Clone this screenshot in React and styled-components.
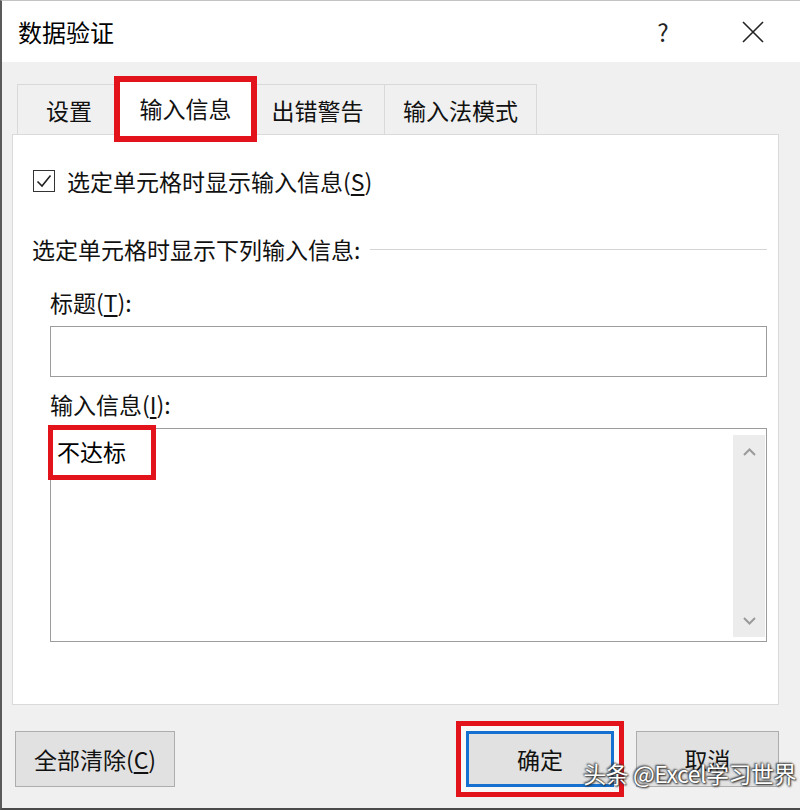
import React from "react";
import styled, { createGlobalStyle } from "styled-components";

const GlobalStyle = createGlobalStyle`
  html, body {
    margin: 0;
    padding: 0;
    background: #f0f0f0;
  }
  * {
    box-sizing: border-box;
  }
`;

const MARK = "#e3131b";

const Dialog = styled.div`
  position: relative;
  width: 800px;
  height: 810px;
  overflow: hidden;
  display: flex;
  flex-direction: column;
  border-left: 2px solid #5a5a5a;
  border-top: 1px solid #c4c4c4;
  border-bottom: 2px solid #4a4a4a;
  font-family: "Noto Sans CJK SC", "Noto Sans", sans-serif;
  color: #111;
`;

const TitleBar = styled.div`
  height: 61px;
  flex-shrink: 0;
  display: flex;
  align-items: center;
  padding-left: 16px;
  background: #fff;
`;

const Title = styled.div`
  font-size: 24px;
  line-height: 30px;
  color: #000;
  flex: 1;
`;

const TitleButton = styled.div`
  width: 40px;
  height: 40px;
  display: flex;
  align-items: center;
  justify-content: center;
  font-size: 24px;
  color: #222;
  margin-right: ${p => p.$gap || 0}px;
`;

const Body = styled.div`
  flex: 1;
  display: flex;
  flex-direction: column;
  background: #f0f0f0;
  padding: 20px 21px 0 10px;
`;

const TabRow = styled.div`
  height: 54px;
  display: flex;
  align-items: flex-end;
  padding-left: 6px;
`;

const Tab = styled.div`
  position: relative;
  z-index: ${p => (p.$active ? 2 : 0)};
  width: ${p => p.$w}px;
  height: ${p => (p.$active ? 54 : 52)}px;
  margin-left: -1px;
  display: flex;
  align-items: center;
  justify-content: center;
  font-size: 23px;
  padding-bottom: ${p => (p.$active ? 4 : 2)}px;
  color: #111;
  background: ${p => (p.$active ? "#fff" : "#f0f0f0")};
  border: 1px solid ${p => (p.$active ? "#fff" : "#d9d9d9")};
  border-bottom: none;
  outline: ${p => (p.$active ? `6px solid ${MARK}` : "none")};
`;

const Panel = styled.div`
  position: relative;
  z-index: 1;
  height: 571px;
  margin-top: -2px;
  background: #fff;
  border: 1px solid #dadada;
  padding: 0 11px 0 20px;
  display: flex;
  flex-direction: column;
`;

const CheckRow = styled.label`
  margin-top: 31px;
  height: 30px;
  display: flex;
  align-items: center;
  font-size: 23px;
`;

const CheckBox = styled.span`
  width: 22px;
  height: 22px;
  border: 1.5px solid #333;
  display: flex;
  align-items: center;
  justify-content: center;
  margin-right: 12px;
`;

const Key = styled.span`
  text-decoration: underline;
  text-underline-offset: 3px;
`;

const GroupHeader = styled.div`
  margin-top: 38px;
  height: 30px;
  display: flex;
  align-items: center;
  font-size: 23px;
  margin-left: -1px;
`;

const GroupLine = styled.div`
  flex: 1;
  height: 1px;
  background: #d5d5d5;
  margin-left: 10px;
`;

const Fields = styled.div`
  padding-left: 17px;
  display: flex;
  flex-direction: column;
`;

const FieldLabel = styled.div`
  margin-top: ${p => p.$top}px;
  height: 30px;
  line-height: 30px;
  font-size: 23px;
`;

const TextBox = styled.div`
  margin-top: 9px;
  height: 51px;
  border: 1px solid #9c9c9c;
  background: #fff;
`;

const TextArea = styled.div`
  margin-top: 9px;
  height: 214px;
  border: 1px solid #9c9c9c;
  background: #fff;
  display: flex;
`;

const AreaContent = styled.div`
  flex: 1;
  padding: 1px 0 0 2px;
`;

const Highlight = styled.span`
  display: inline-block;
  width: 98px;
  height: 45px;
  padding: 6px 0 0 4px;
  font-size: 23px;
  line-height: 30px;
  color: #000;
  outline: 5px solid ${MARK};
`;

const ScrollBar = styled.div`
  width: 32px;
  margin: 6px 1px 4px 0;
  background: #ececec;
  display: flex;
  flex-direction: column;
  justify-content: space-between;
  align-items: center;
  padding: 13px 0 12px;
`;

const Footer = styled.div`
  margin-top: 26px;
  padding-left: 3px;
  display: flex;
  align-items: center;
  gap: 22px;
`;

const Button = styled.div`
  width: ${p => p.$w}px;
  height: 56px;
  display: flex;
  align-items: center;
  justify-content: center;
  font-size: 23px;
  color: #111;
  background: #e1e1e1;
  border: ${p => (p.$primary ? "3px solid #1570cf" : "1px solid #adadad")};
  box-shadow: ${p => (p.$marked ? `0 0 0 5px #f8f8f8, 0 0 0 10px ${MARK}` : "none")};
  margin-right: ${p => (p.$push ? "auto" : "0")};
`;

const Watermark = styled.div`
  position: absolute;
  right: 4px;
  bottom: 21px;
  font-size: 23px;
  line-height: 28px;
  color: #fff;
  text-shadow: 0 0 2px #333, 1px 1px 2px #222, -1px -1px 2px #444;
  letter-spacing: -0.5px;
`;

const CheckIcon = () => (
  <svg width="16" height="14" viewBox="0 0 16 14">
    <path d="M1.5 7.5 L6 12 L14.5 1.5" fill="none" stroke="#222" strokeWidth="1.6" />
  </svg>
);

const CloseIcon = () => (
  <svg width="22" height="22" viewBox="0 0 22 22">
    <path d="M1 1 L21 21 M21 1 L1 21" stroke="#222" strokeWidth="1.6" />
  </svg>
);

const Chevron = ({ down }) => (
  <svg width="13" height="8" viewBox="0 0 13 8">
    <path
      d={down ? "M1 1 L6.5 6.5 L12 1" : "M1 7 L6.5 1.5 L12 7"}
      fill="none"
      stroke="#9a9a9a"
      strokeWidth="2"
    />
  </svg>
);

const tabs = [
  { label: "设置", w: 104 },
  { label: "输入信息", w: 131, active: true },
  { label: "出错警告", w: 135 },
  { label: "输入法模式", w: 153 },
];

export default function App() {
  return (
    <>
      <GlobalStyle />
      <Dialog>
        <TitleBar>
          <Title>数据验证</Title>
          <TitleButton $gap={50}>?</TitleButton>
          <TitleButton $gap={27}>
            <CloseIcon />
          </TitleButton>
        </TitleBar>
        <Body>
          <TabRow>
            {tabs.map(t => (
              <Tab key={t.label} $w={t.w} $active={t.active}>
                {t.label}
              </Tab>
            ))}
          </TabRow>
          <Panel>
            <CheckRow>
              <CheckBox>
                <CheckIcon />
              </CheckBox>
              选定单元格时显示输入信息(<Key>S</Key>)
            </CheckRow>
            <GroupHeader>
              选定单元格时显示下列输入信息:
              <GroupLine />
            </GroupHeader>
            <Fields>
              <FieldLabel $top={23}>
                标题(<Key>T</Key>):
              </FieldLabel>
              <TextBox />
              <FieldLabel $top={12}>
                输入信息(<Key>I</Key>):
              </FieldLabel>
              <TextArea>
                <AreaContent>
                  <Highlight>不达标</Highlight>
                </AreaContent>
                <ScrollBar>
                  <Chevron />
                  <Chevron down />
                </ScrollBar>
              </TextArea>
            </Fields>
          </Panel>
          <Footer>
            <Button $w={160} $push>
              全部清除(<Key>C</Key>)
            </Button>
            <Button $w={148} $primary $marked>
              确定
            </Button>
            <Button $w={143}>取消</Button>
          </Footer>
        </Body>
        <Watermark>头条 @Excel学习世界</Watermark>
      </Dialog>
    </>
  );
}
